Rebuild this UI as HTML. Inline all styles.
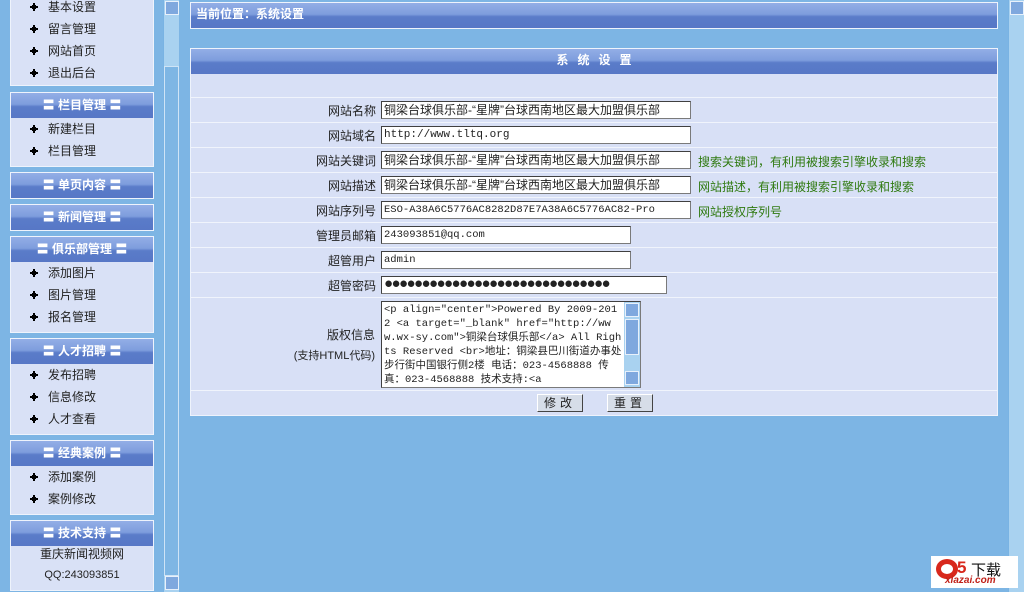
<!DOCTYPE html>
<html><head><meta charset="utf-8"><style>
*{margin:0;padding:0;box-sizing:border-box}
body{width:1024px;height:592px;overflow:hidden;background:#7db5e4;font-family:"Liberation Sans","Noto Sans CJK SC","WenQuanYi Zen Hei",sans-serif;font-size:12px;color:#222;position:relative}
.abs{position:absolute}
.panel{position:absolute;left:10px;width:144px;background:#d9e1f6;border:1px solid #eef3fc}
.hd{height:25px;background:linear-gradient(#93aee6 0,#7e9ddd 45%,#5a7cc9 55%,#5777c6 100%);color:#fff;font-weight:bold;font-size:12px;text-align:center;line-height:25px;letter-spacing:0}
.it{height:22px;line-height:22px;padding-left:37px;position:relative;font-size:12px;color:#222}
.it:before{content:"";position:absolute;left:21px;top:9px;width:4px;height:4px;background:#000;box-shadow:-3px 0 0 -1px #000,3px 0 0 -1px #000,0 -3px 0 -1px #000,0 3px 0 -1px #000}
.sb{position:absolute;width:16px;background:#a9d2f0;border-left:1px solid #79b3e3}
.arr{position:absolute;left:1px;width:14px;height:14px;background:#7fa8de;border:1px solid #e8f1fb}
.row{position:absolute;left:191px;width:806px;background:#d8e0f6;border-top:1px solid #f0f4fc}
.lab{position:absolute;right:621px;text-align:right;font-size:12px;color:#222}
.inp{position:absolute;left:190px;height:18px;background:#fff;border:1px solid #7a7a7a;border-top-color:#404040;border-left-color:#404040;font-family:"Liberation Mono","Noto Sans CJK SC",monospace;font-size:11px;line-height:16px;padding-left:2px;white-space:nowrap;overflow:hidden}
.tip{position:absolute;left:507px;color:#2f7a10;font-size:12px}
.btn{position:absolute;top:3px;height:18px;width:46px;background:#d6dde8;border:1px solid #fff;border-right-color:#444;border-bottom-color:#444;text-align:center;line-height:16px;letter-spacing:4px;font-size:12px}
</style></head><body>
<div class="panel" style="top:-6px;height:92px;border-top:none"><div style="height:2px"></div>
<div class="it">基本设置</div><div class="it">留言管理</div><div class="it">网站首页</div><div class="it">退出后台</div></div>
<div class="panel" style="top:92px;height:75px"><div class="hd">〓 栏目管理 〓</div><div style="height:0px"></div><div class="it">新建栏目</div><div class="it">栏目管理</div></div>
<div class="panel" style="top:172px;height:27px"><div class="hd">〓 单页内容 〓</div></div>
<div class="panel" style="top:204px;height:27px"><div class="hd">〓 新闻管理 〓</div></div>
<div class="panel" style="top:236px;height:97px"><div class="hd">〓 俱乐部管理 〓</div><div class="it">添加图片</div><div class="it">图片管理</div><div class="it">报名管理</div></div>
<div class="panel" style="top:338px;height:97px"><div class="hd">〓 人才招聘 〓</div><div class="it">发布招聘</div><div class="it">信息修改</div><div class="it">人才查看</div></div>
<div class="panel" style="top:440px;height:75px"><div class="hd">〓 经典案例 〓</div><div class="it">添加案例</div><div class="it">案例修改</div></div>
<div class="panel" style="top:520px;height:71px"><div class="hd">〓 技术支持 〓</div><div style="text-align:center;line-height:21px;margin-top:-2px">重庆新闻视频网</div><div style="text-align:center;line-height:21px;font-size:11px">QQ:243093851</div></div>
<div class="sb" style="left:163px;top:0;height:592px"><div class="arr" style="top:1px"></div>
<div style="position:absolute;left:0;top:66px;width:15px;height:510px;background:#7eb6e4;border:1px solid #cfe4f6"></div>
<div class="arr" style="top:576px"></div></div>
<div class="sb" style="left:1008px;top:0;height:592px"><div class="arr" style="top:1px"></div></div>
<div class="abs" style="left:190px;top:2px;width:808px;height:27px;border:1px solid #eef3fc;background:linear-gradient(#93aee6 0,#7e9ddd 45%,#5a7cc9 55%,#5777c6 100%);color:#fff;font-weight:bold;line-height:23px;padding-left:5px">当前位置：系统设置</div>
<div class="abs" style="left:190px;top:48px;width:808px;height:368px;border:1px solid #eef3fc;background:#d8e0f6"></div>
<div class="abs" style="left:191px;top:49px;width:806px;height:25px;background:linear-gradient(#93aee6 0,#7e9ddd 45%,#5a7cc9 55%,#5777c6 100%);color:#fff;font-weight:bold;text-align:center;line-height:22px;letter-spacing:9px;padding-left:9px">系统设置</div>
<div class="abs" style="left:378px;top:97px;width:1px;height:293px;background:#f0f4fc"></div>
<div class="row" style="top:97px;height:25px"><span class="lab" style="top:4px">网站名称</span><div class="inp" style="top:3px;width:310px;font-family:'Liberation Sans','Noto Sans CJK SC',sans-serif;font-size:12px">铜梁台球俱乐部-“星牌”台球西南地区最大加盟俱乐部</div></div>
<div class="row" style="top:122px;height:25px"><span class="lab" style="top:4px">网站域名</span><div class="inp" style="top:3px;width:310px">http://www.tltq.org</div></div>
<div class="row" style="top:147px;height:25px"><span class="lab" style="top:4px">网站关键词</span><div class="inp" style="top:3px;width:310px;font-family:'Liberation Sans','Noto Sans CJK SC',sans-serif;font-size:12px">铜梁台球俱乐部-“星牌”台球西南地区最大加盟俱乐部</div><span class="tip" style="top:5px">搜索关键词，有利用被搜索引擎收录和搜索</span></div>
<div class="row" style="top:172px;height:25px"><span class="lab" style="top:4px">网站描述</span><div class="inp" style="top:3px;width:310px;font-family:'Liberation Sans','Noto Sans CJK SC',sans-serif;font-size:12px">铜梁台球俱乐部-“星牌”台球西南地区最大加盟俱乐部</div><span class="tip" style="top:5px">网站描述，有利用被搜索引擎收录和搜索</span></div>
<div class="row" style="top:197px;height:25px"><span class="lab" style="top:4px">网站序列号</span><div class="inp" style="top:3px;width:310px;font-size:10.5px">ESO-A38A6C5776AC8282D87E7A38A6C5776AC82-Pro</div><span class="tip" style="top:5px">网站授权序列号</span></div>
<div class="row" style="top:222px;height:25px"><span class="lab" style="top:4px">管理员邮箱</span><div class="inp" style="top:3px;width:250px;font-size:10.5px">243093851@qq.com</div></div>
<div class="row" style="top:247px;height:25px"><span class="lab" style="top:4px">超管用户</span><div class="inp" style="top:3px;width:250px;font-size:10.5px">admin</div></div>
<div class="row" style="top:272px;height:25px"><span class="lab" style="top:4px">超管密码</span><div class="inp" style="top:3px;width:286px;font-size:15px;letter-spacing:-1.5px;line-height:15px">●●●●●●●●●●●●●●●●●●●●●●●●●●●●●●</div></div>
<div class="row" style="top:297px;height:93px"><span class="lab" style="top:27px;line-height:20px;right:622px">版权信息<br><span style="font-size:11px">(支持HTML代码)</span></span>
<div class="inp" style="top:3px;width:260px;height:87px;white-space:normal;font-size:10.5px;line-height:14px;padding:1px 18px 0 2px;word-break:break-all">&lt;p align="center"&gt;Powered By 2009-2012 &lt;a target="_blank" href="http://www.wx-sy.com"&gt;铜梁台球俱乐部&lt;/a&gt; All Rights Reserved &lt;br&gt;地址：铜梁县巴川街道办事处步行街中国银行侧2楼 电话：023-4568888 传真：023-4568888 技术支持:&lt;a
<div style="position:absolute;right:0;top:0;width:16px;height:85px;background:#a9d2f0"><div class="arr" style="top:1px;left:1px"></div><div style="position:absolute;left:1px;top:17px;width:14px;height:36px;background:#7fa8de;border:1px solid #e8f1fb"></div><div class="arr" style="top:69px;left:1px"></div></div></div></div>
<div class="row" style="top:390px;height:25px"><div class="btn" style="left:346px">修改</div><div class="btn" style="left:416px">重置</div></div>
<div class="abs" style="left:931px;top:556px;width:87px;height:32px;background:#fff">
<div class="abs" style="left:5px;top:3px;width:22px;height:20px;border-radius:50%;border:5px solid #d8281c"></div>
<div class="abs" style="left:26px;top:2px;font-size:17px;font-weight:bold;color:#d8281c">5</div>
<div class="abs" style="left:40px;top:3px;font-size:15px;color:#111">下载</div>
<div class="abs" style="left:14px;top:19px;font-size:10px;font-weight:bold;color:#c02018;font-style:italic">xiazai.com</div></div>
</body></html>
